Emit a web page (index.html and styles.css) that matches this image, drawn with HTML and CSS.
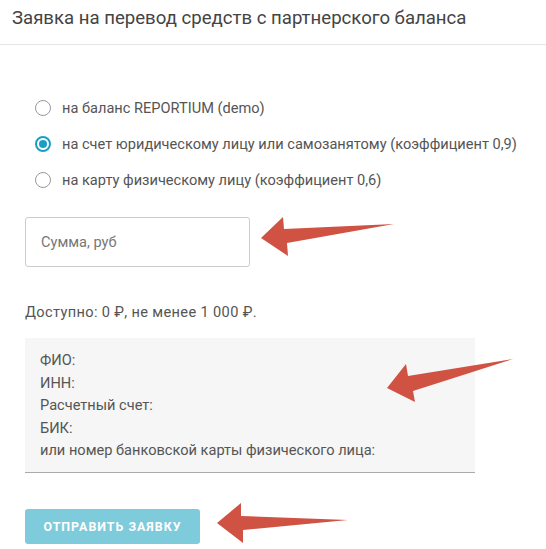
FILE: index.html
```html
<!DOCTYPE html>
<html lang="ru">
<head>
<meta charset="utf-8">
<link rel="stylesheet" href="styles.css">
</head>
<body>
<div class="page">
  <header class="head">
    <h1 class="title">Заявка на перевод средств с партнерского баланса</h1>
  </header>
  <main class="body">
    <div class="radios">
      <label class="radio"><span class="dot"></span><span>на баланс REPORTIUM (demo)</span></label>
      <label class="radio checked"><span class="dot"></span><span>на счет юридическому лицу или самозанятому (коэффициент 0,9)</span></label>
      <label class="radio"><span class="dot"></span><span>на карту физическому лицу (коэффициент 0,6)</span></label>
    </div>
    <div class="input"><span class="ph">Сумма, руб</span></div>
    <p class="avail">Доступно: 0 ₽, не менее 1 000 ₽.</p>
    <div class="area">
      <div>ФИО:</div>
      <div>ИНН:</div>
      <div>Расчетный счет:</div>
      <div>БИК:</div>
      <div>или номер банковской карты физического лица:</div>
    </div>
    <button class="btn">Отправить заявку</button>
  </main>
  <svg class="arrows" width="546" height="549" viewBox="0 0 546 549">
    <path fill="#d05243" d="M261 238 L283 217 L284 229 L394 224 L287 243 L288 256 Z"/>
    <path fill="#d05243" d="M387 388 L406 364 L408 376 L513 359 L413 391 L415 402 Z"/>
    <path fill="#d05243" d="M217 523 L241 503 L241 516 L348 520 L243 530 L243 543 Z"/>
  </svg>
</div>
</body>
</html>
```

FILE: styles.css
```css
* { box-sizing: border-box; }
html, body { margin: 0; padding: 0; background: #fff; }
body { font-family: Roboto, "Noto Sans", sans-serif; color: #555; }
.page { position: relative; width: 546px; height: 549px; overflow: hidden; }
.head { height: 45px; border-bottom: 1px solid #e6e6e6; padding: 6px 0 0 12px; }
.title { margin: 0; font-size: 18.6px; font-weight: 400; color: #444; line-height: 24px; }
.body { padding: 0 0 0 25px; }
.radios { display: flex; flex-direction: column; gap: 14px; padding-top: 52px; }
.radio { display: flex; align-items: center; gap: 11px; font-size: 14.6px; line-height: 22px; color: #555; padding-left: 10px; }
.dot { width: 16px; height: 16px; border-radius: 50%; border: 1.6px solid #9a9a9a; flex: none; position: relative; }
.radio.checked .dot { border: 2px solid #1a9fc4; }
.radio.checked .dot::after { content: ""; position: absolute; left: 2px; top: 2px; width: 8px; height: 8px; border-radius: 50%; background: #1a9fc4; }
.input { width: 225px; height: 50px; margin-top: 26px; border: 1px solid #ccc; border-radius: 3px; display: flex; align-items: center; padding-left: 15px; }
.ph { font-size: 14.6px; color: #777; }
.avail { margin: 36px 0 0; font-size: 14.6px; letter-spacing: 0.35px; line-height: 18px; color: #555; }
.area { width: 450px; height: 135px; margin-top: 17px; background: #f6f6f6; border-bottom: 1px solid #aaa; padding: 11px 15px 0; font-size: 14.6px; line-height: 22.5px; color: #555; }
.btn { display: block; margin-top: 36px; width: 175px; height: 35px; border: 0; border-radius: 3px; background: #7ecbdc; color: #fff; font-family: Roboto, sans-serif; font-weight: 700; font-size: 12.4px; letter-spacing: 1px; text-transform: uppercase; padding: 0; }
.arrows { position: absolute; left: 0; top: 0; pointer-events: none; }
```
